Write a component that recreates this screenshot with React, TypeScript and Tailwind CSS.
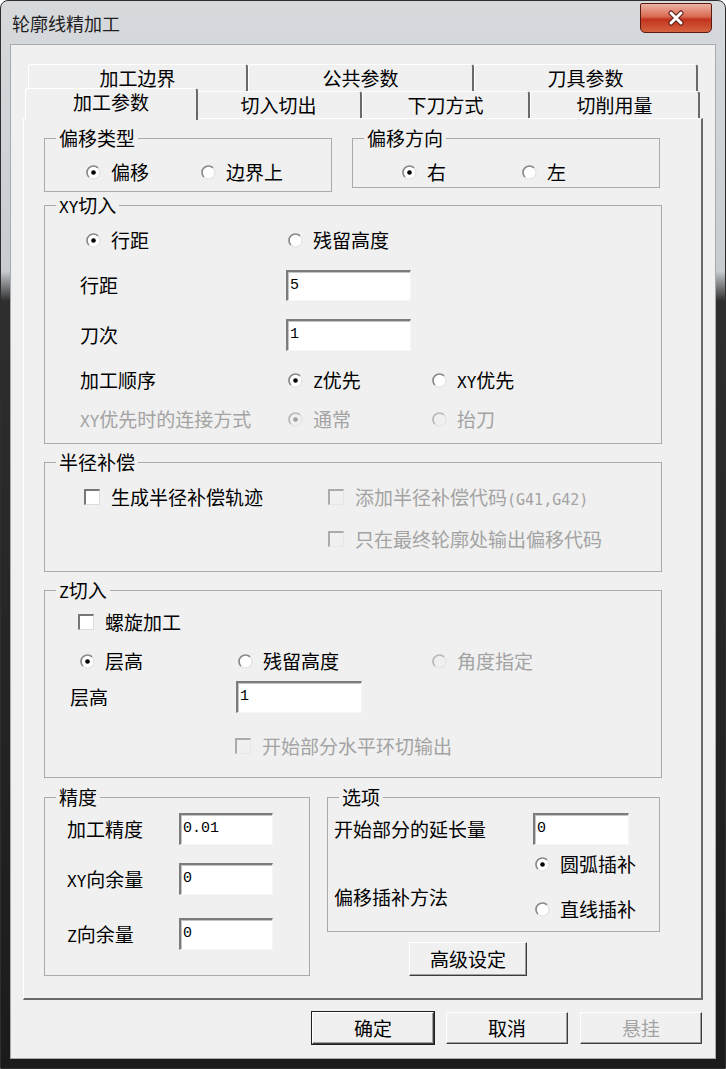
import React from 'react';

type Kids = { children?: React.ReactNode };

const Lat: React.FC<Kids> = ({ children }) => (
  <span className="font-['DejaVu_Sans_Mono',monospace] text-[16px] leading-none">{children}</span>
);

const Radio: React.FC<{ checked?: boolean; disabled?: boolean }> = ({ checked, disabled }) => (
  <svg width="15" height="15" viewBox="0 0 15 15" className="shrink-0">
    <circle cx="7.5" cy="7.5" r="6.5" fill={disabled ? '#f0f0f0' : '#fff'} />
    <path d="M12.1 2.9 A6.5 6.5 0 0 0 2.9 12.1" fill="none" stroke={disabled ? '#b8b8b8' : '#8a8a8a'} strokeWidth="1.7" />
    <path d="M2.9 12.1 A6.5 6.5 0 0 0 12.1 2.9" fill="none" stroke="#e2e2e2" strokeWidth="1.2" />
    {checked && <circle cx="7.5" cy="7.5" r="2.3" fill={disabled ? '#a0a0a0' : '#000'} />}
  </svg>
);

const Check: React.FC<{ disabled?: boolean }> = ({ disabled }) => (
  <span
    className={`block w-[16px] h-[16px] shrink-0 border-t-2 border-l-2 border-r border-b ${
      disabled
        ? 'border-t-[#ababab] border-l-[#ababab] border-r-[#e6e6e6] border-b-[#e6e6e6] bg-[#f0f0f0]'
        : 'border-t-[#777777] border-l-[#777777] border-r-[#dcdcdc] border-b-[#dcdcdc] bg-white'
    }`}
  />
);

interface OptProps extends Kids {
  w?: string;
  checked?: boolean;
  disabled?: boolean;
}

const Opt: React.FC<OptProps> = ({ w = '', checked, disabled, children }) => (
  <div className={`flex items-center shrink-0 ${w}`}>
    <Radio checked={checked} disabled={disabled} />
    <span className={`ml-[10px] ${disabled ? 'text-[#a3a3a3]' : ''}`}>{children}</span>
  </div>
);

const CheckOpt: React.FC<OptProps> = ({ w = '', disabled, children }) => (
  <div className={`flex items-center shrink-0 ${w}`}>
    <Check disabled={disabled} />
    <span className={`ml-[11px] ${disabled ? 'text-[#a3a3a3]' : ''}`}>{children}</span>
  </div>
);

const Field: React.FC<{ value: string; w: string; h?: string }> = ({ value, w, h = 'h-[32px]' }) => (
  <div
    className={`${w} ${h} shrink-0 bg-white border-t-2 border-l-2 border-r border-b border-t-[#7c7c7c] border-l-[#7c7c7c] border-r-[#f6f6f6] border-b-[#f6f6f6] shadow-[inset_1px_1px_0_#c4c4c4] pl-[2px] flex items-center font-['Liberation_Mono',monospace] text-[15px]`}
  >
    {value}
  </div>
);

interface GroupProps extends Kids {
  title: React.ReactNode;
  className?: string;
}

const Group: React.FC<GroupProps> = ({ title, className = '', children }) => (
  <fieldset className={`border border-[#a9a9a9] shrink-0 ${className}`}>
    <legend className="ml-[11px] px-[3px] h-[20px] leading-[20px] flex items-center">
      <span className="leading-[20px]">{title}</span>
    </legend>
    {children}
  </fieldset>
);

interface BtnProps extends Kids {
  className?: string;
  isDefault?: boolean;
  disabled?: boolean;
}

const Btn: React.FC<BtnProps> = ({ className = '', isDefault, disabled, children }) => (
  <div
    className={`flex items-center justify-center bg-[#f0f0f0] border border-t-white border-l-white border-r-[#3c3c3c] border-b-[#3c3c3c] shadow-[inset_-1px_-1px_0_#a0a0a0] ${
      isDefault ? 'outline outline-1 outline-[#1e1e1e]' : ''
    } ${disabled ? 'text-[#a3a3a3]' : ''} ${className}`}
  >
    {children}
  </div>
);

const Tab: React.FC<{ label: string; className?: string }> = ({ label, className = '' }) => (
  <div
    className={`flex items-center justify-center bg-[#f0f0f0] border-t border-l border-t-white border-l-white border-r-2 border-r-[#6a6a6a] rounded-t-[3px] ${className}`}
  >
    {label}
  </div>
);

export default function App() {
  return (
    <div className="w-[726px] h-[1069px] overflow-hidden rounded-t-[8px] border border-[#2e2e2e] bg-[linear-gradient(to_bottom,#d7dadd_0px,#c8ccd0_270px,#2e2e2e_300px,#1b1b1b_100%)] flex flex-col font-['Noto_Sans_CJK_SC',sans-serif] text-[19px] text-black">
      {/* Title bar */}
      <div className="h-[43px] shrink-0 flex items-start">
        <div className="pl-[11px] pt-[11px] text-[18px] leading-[22px] text-[#1e1e1e]">轮廓线精加工</div>
        <div className="ml-auto mt-[2px] mr-[13px] w-[72px] h-[30px] rounded-b-[5px] rounded-t-[2px] border border-[#5c1a12] bg-[linear-gradient(to_bottom,#ecb3a4_0%,#d96a52_45%,#c2341e_55%,#d4623f_100%)] flex items-center justify-center">
          <svg width="18" height="16" viewBox="0 0 18 16">
            <path d="M4 3 L14 13 M14 3 L4 13" stroke="#5a1a12" strokeWidth="5" strokeLinecap="round" />
            <path d="M4 3 L14 13 M14 3 L4 13" stroke="#ffffff" strokeWidth="3" strokeLinecap="round" />
          </svg>
        </div>
      </div>

      {/* Client area */}
      <div className="mx-[9px] mb-[9px] flex-1 bg-[#f0f0f0] border border-[#a5aab0] flex flex-col">
        {/* Tab control */}
        <div className="ml-[12px] mt-[19px] w-[680px] flex flex-col">
          <div className="flex pl-[5px] h-[27px]">
            <Tab label="加工边界" className="w-[220px] h-full" />
            <Tab label="公共参数" className="w-[226px] h-full" />
            <Tab label="刀具参数" className="w-[224px] h-full" />
          </div>
          <div className="flex pl-[5px] h-[27px]">
            <Tab label="加工参数" className="relative z-10 w-[173px] h-[32px] -mt-[3px] -ml-[3px] -mr-[2px] pb-[4px]" />
            <Tab label="切入切出" className="w-[166px] h-full" />
            <Tab label="下刀方式" className="w-[168px] h-full" />
            <Tab label="切削用量" className="w-[170px] h-full" />
          </div>

          {/* Panel */}
          <div className="h-[882px] border-t border-l border-t-white border-l-white border-r-2 border-b-2 border-r-[#696969] border-b-[#696969] flex flex-col pl-[20px]">
            {/* Row 1 */}
            <div className="flex mt-[9px] items-start">
              <Group title="偏移类型" className="w-[288px] h-[64px]">
                <div className="flex items-center mt-[12px] h-[24px] pl-[41px]">
                  <Opt w="w-[115px]" checked>偏移</Opt>
                  <Opt>边界上</Opt>
                </div>
              </Group>
              <Group title="偏移方向" className="ml-[20px] w-[308px] h-[60px]">
                <div className="flex items-center mt-[12px] h-[24px] pl-[49px]">
                  <Opt w="w-[120px]" checked>右</Opt>
                  <Opt>左</Opt>
                </div>
              </Group>
            </div>

            {/* XY切入 */}
            <Group title={<><Lat>XY</Lat>切入</>} className="mt-[3px] w-[618px] h-[249px]">
              <div className="flex flex-col pl-[41px]">
                <div className="flex items-center mt-[13px] h-[24px]">
                  <Opt w="w-[202px]" checked>行距</Opt>
                  <Opt>残留高度</Opt>
                </div>
              </div>
              <div className="flex flex-col pl-[35px]">
                <div className="flex items-center mt-[18px] h-[31px]">
                  <span className="w-[206px]">行距</span>
                  <Field value="5" w="w-[125px]" h="h-[31px]" />
                </div>
                <div className="flex items-center mt-[18px] h-[32px]">
                  <span className="w-[206px]">刀次</span>
                  <Field value="1" w="w-[125px]" />
                </div>
                <div className="flex items-center mt-[17px] h-[24px]">
                  <span className="w-[208px]">加工顺序</span>
                  <Opt w="w-[144px]" checked><Lat>Z</Lat>优先</Opt>
                  <Opt><Lat>XY</Lat>优先</Opt>
                </div>
                <div className="flex items-center mt-[15px] h-[24px]">
                  <span className="w-[208px] text-[#a3a3a3]"><Lat>XY</Lat>优先时的连接方式</span>
                  <Opt w="w-[144px]" checked disabled>通常</Opt>
                  <Opt disabled>抬刀</Opt>
                </div>
              </div>
            </Group>

            {/* 半径补偿 */}
            <Group title="半径补偿" className="mt-[8px] w-[618px] h-[120px]">
              <div className="flex items-center mt-[13px] h-[24px] pl-[39px]">
                <CheckOpt w="w-[244px]">生成半径补偿轨迹</CheckOpt>
                <CheckOpt disabled>
                  添加半径补偿代码<span className="font-['DejaVu_Sans_Mono',monospace] text-[15px] leading-none">(G41,G42)</span>
                </CheckOpt>
              </div>
              <div className="flex items-center mt-[18px] h-[24px] pl-[283px]">
                <CheckOpt disabled>只在最终轮廓处输出偏移代码</CheckOpt>
              </div>
            </Group>

            {/* Z切入 */}
            <Group title={<><Lat>Z</Lat>切入</>} className="mt-[8px] w-[618px] h-[198px]">
              <div className="flex items-center mt-[10px] h-[24px] pl-[33px]">
                <CheckOpt>螺旋加工</CheckOpt>
              </div>
              <div className="flex items-center mt-[15px] h-[24px] pl-[35px]">
                <Opt w="w-[158px]" checked>层高</Opt>
                <Opt w="w-[194px]">残留高度</Opt>
                <Opt disabled>角度指定</Opt>
              </div>
              <div className="flex items-center mt-[8px] h-[32px] pl-[25px]">
                <span className="w-[166px]">层高</span>
                <Field value="1" w="w-[126px]" />
              </div>
              <div className="flex items-center mt-[21px] h-[24px] pl-[190px]">
                <CheckOpt disabled>开始部分水平环切输出</CheckOpt>
              </div>
            </Group>

            {/* Bottom row */}
            <div className="flex mt-[9px] items-start">
              <Group title="精度" className="w-[266px] h-[189px]">
                <div className="flex flex-col pl-[22px]">
                  <div className="flex items-center mt-[6px] h-[32px]">
                    <span className="w-[112px]">加工精度</span>
                    <Field value="0.01" w="w-[94px]" />
                  </div>
                  <div className="flex items-center mt-[18px] h-[32px]">
                    <span className="w-[112px]"><Lat>XY</Lat>向余量</span>
                    <Field value="0" w="w-[94px]" />
                  </div>
                  <div className="flex items-center mt-[23px] h-[32px]">
                    <span className="w-[112px]"><Lat>Z</Lat>向余量</span>
                    <Field value="0" w="w-[94px]" />
                  </div>
                </div>
              </Group>
              <div className="ml-[17px] w-[333px] flex flex-col">
                <Group title="选项" className="w-[333px] h-[145px]">
                  <div className="flex items-center mt-[6px] h-[32px] pl-[6px]">
                    <span className="w-[199px]">开始部分的延长量</span>
                    <Field value="0" w="w-[96px]" />
                  </div>
                  <div className="flex">
                    <div className="w-[207px] pl-[6px] pt-[40px] h-[69px] leading-[24px]">偏移插补方法</div>
                    <div className="flex flex-col mt-[7px]">
                      <div className="flex items-center h-[24px]">
                        <Opt checked>圆弧插补</Opt>
                      </div>
                      <div className="flex items-center h-[24px] mt-[21px]">
                        <Opt>直线插补</Opt>
                      </div>
                    </div>
                  </div>
                </Group>
                <Btn className="mt-[10px] ml-[82px] w-[118px] h-[34px]">高级设定</Btn>
              </div>
            </div>
          </div>
        </div>

        {/* Dialog buttons */}
        <div className="flex justify-end gap-[12px] mt-[12px] mr-[13px]">
          <Btn isDefault className="w-[122px] h-[32px]">确定</Btn>
          <Btn className="w-[122px] h-[32px]">取消</Btn>
          <Btn disabled className="w-[122px] h-[32px]">悬挂</Btn>
        </div>
      </div>
    </div>
  );
}
